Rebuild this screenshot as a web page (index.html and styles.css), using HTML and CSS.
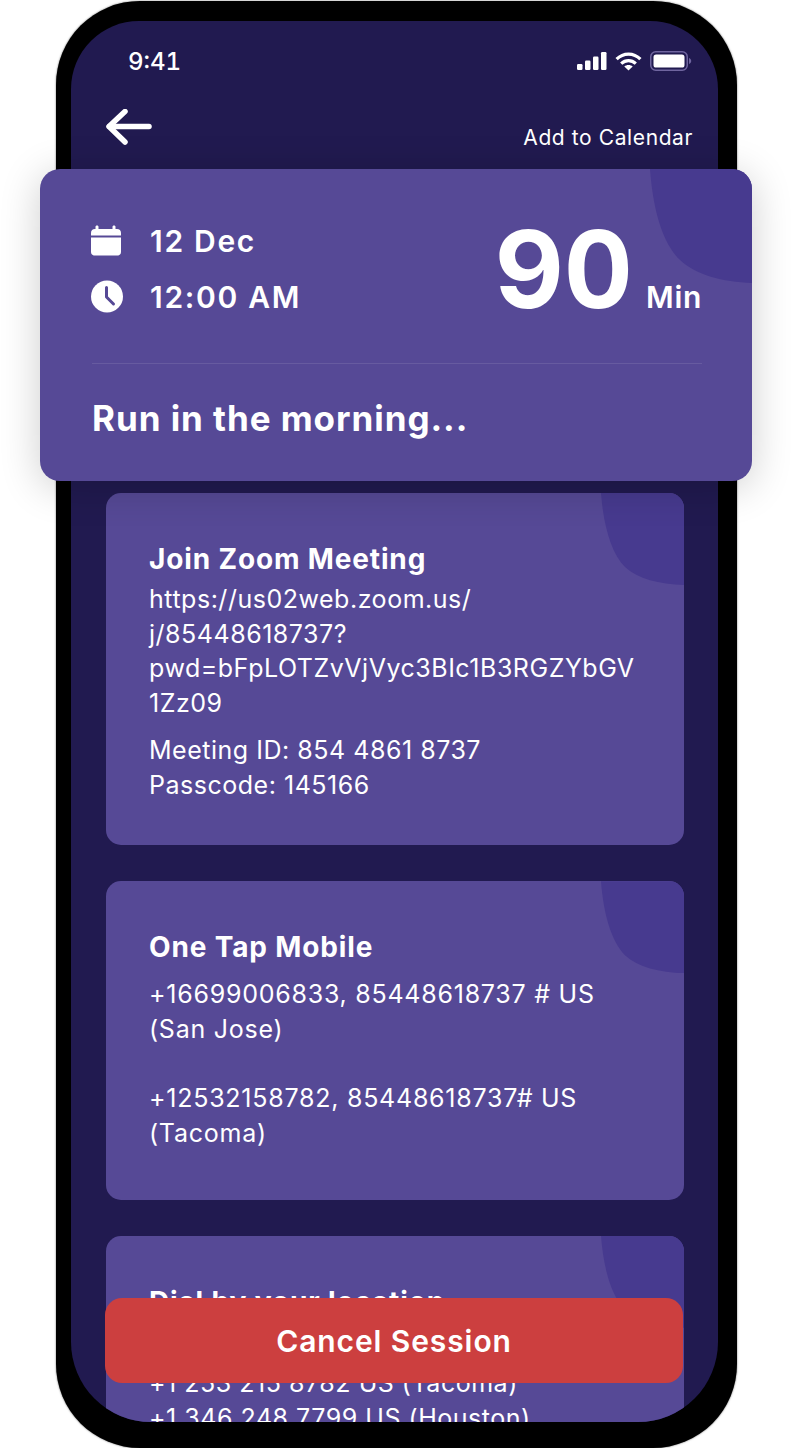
FILE: index.html
```html
<!DOCTYPE html>
<html lang="en">

<head>
    <meta charset="UTF-8">
    <meta name="viewport" content="width=device-width, initial-scale=1.0">
    <title>Session Details</title>
    <link rel="stylesheet" href="styles.css">
</head>

<body>
    <div class="phone">
        <div class="screen">
            <div class="status-bar">
                <span class="status-time">9:41</span>
                <div class="status-icons">
                    <svg width="30" height="18" viewBox="0 0 30 18" fill="#fff">
                        <rect x="0" y="12" width="5.5" height="6" rx="1.2" />
                        <rect x="8" y="8.5" width="5.5" height="9.5" rx="1.2" />
                        <rect x="16" y="4.5" width="5.5" height="13.5" rx="1.2" />
                        <rect x="24" y="0" width="5.5" height="18" rx="1.2" />
                    </svg>
                    <svg width="27" height="19" viewBox="0 0 27 19" fill="none" stroke="#fff" stroke-width="3.2">
                        <path d="M1.6 7.2C8.4 .4 18.6 .4 25.4 7.2" />
                        <path d="M6.2 11.6C10.4 7.6 16.6 7.6 20.8 11.6" />
                        <path d="M9.3 14.6L13.5 18.6L17.7 14.6C15.4 12.6 11.6 12.6 9.3 14.6Z" fill="#fff" stroke="none" />
                    </svg>
                    <svg width="42" height="20" viewBox="0 0 42 20">
                        <rect x=".75" y=".75" width="36.5" height="18.5" rx="5" fill="none" stroke="#6f659f" stroke-width="1.5" />
                        <rect x="3.5" y="3.5" width="31" height="13" rx="2.6" fill="#fff" />
                        <path d="M39 7V13C40.4 12.5 41.2 11.4 41.2 10C41.2 8.6 40.4 7.5 39 7Z" fill="#6f659f" />
                    </svg>
                </div>
            </div>

            <div class="top-bar">
                <svg class="back-arrow" width="46" height="36" viewBox="0 0 46 36" fill="none" stroke="#fff" stroke-width="5.500" stroke-linecap="round" stroke-linejoin="round">
                    <path d="M43 17.500H3.500" />
                    <path d="M19 2.500L3 17.500L19 33" />
                </svg>
                <a class="calendar-link">Add to Calendar</a>
            </div>

            <div class="info-list">
                <div class="info-card">
                    <h2>Join Zoom Meeting</h2>
                    <p class="zoom-link">https://us02web.zoom.us/<br>j/85448618737?<br>pwd=bFpLOTZvVjVyc3BIc1B3RGZYbGV<br>1Zz09</p>
                    <p>Meeting ID: 854 4861 8737<br>Passcode: 145166</p>
                </div>
                <div class="info-card tap-card">
                    <h2 class="tall">One Tap Mobile</h2>
                    <p>+16699006833, 85448618737 # US<br>(San Jose)<br><br>+12532158782, 85448618737# US<br>(Tacoma)</p>
                </div>
                <div class="info-card">
                    <h2 class="tall">Dial by your location</h2>
                    <p>+1 669 900 6833 US (San Jose)<br>+1 253 215 8782 US (Tacoma)<br>+1 346 248 7799 US (Houston)<br>+1 301 715 8592 US (Washington DC)</p>
                </div>
            </div>
        </div>

        <div class="summary-card">
            <div class="summary-top">
                <div class="when">
                    <div class="when-row">
                        <svg width="32" height="31" viewBox="1 0 32 31" fill="#fff">
                            <path d="M7 0.500C8 0.500 8.500 1 8.500 2V4H22.500V2C22.500 1 23 0.500 24 0.500C25 0.500 25.500 1 25.500 2V4H27C29.500 4 31 5.500 31 8V10.500H1V8C1 5.500 2.500 4 5 4H5.500V2C5.500 1 6 0.500 7 0.500Z" />
                            <path d="M1 12.500H31V27C31 29 29.500 30.500 27.500 30.500H4.500C2.500 30.500 1 29 1 27Z" />
                        </svg>
                        <span>12 Dec</span>
                    </div>
                    <div class="when-row">
                        <svg width="32" height="33" viewBox="0 0 32 33">
                            <circle cx="16" cy="16.500" r="16" fill="#fff" />
                            <path d="M15.500 7.500V17L22.500 24" fill="none" stroke="#564996" stroke-width="3" stroke-linecap="round" stroke-linejoin="round" />
                        </svg>
                        <span>12:00 AM</span>
                    </div>
                </div>
                <div class="duration">
                    <span class="duration-num">90</span>
                    <span class="duration-unit">Min</span>
                </div>
            </div>
            <h1 class="session-title">Run in the morning...</h1>
        </div>

        <button class="cancel-button">Cancel Session</button>
    </div>
</body>

</html>
```

FILE: styles.css
```css
body {
    margin: 0;
    background-color: #ffffff;
    color: #ffffff;
    font-family: 'Inter', sans-serif;
    overflow: hidden;
}

.phone {
    position: relative;
    box-sizing: border-box;
    width: 681px;
    height: 1447px;
    margin: 1px 0 0 56px;
    padding: 20px 19px 26px 15px;
    background-color: #000000;
    border-radius: 84px;
    box-shadow: 0 0 2px rgba(0, 0, 0, 0.6);
}

.screen {
    height: 100%;
    overflow: hidden;
    background-color: #211a50;
    border-radius: 68px 68px 80px 80px;
}

.status-bar {
    display: flex;
    justify-content: space-between;
    align-items: center;
    height: 80px;
    padding: 0 26px 0 57px;
}

.status-time {
    font-size: 24px;
    font-weight: 500;
    font-variant-numeric: tabular-nums;
}

.status-icons {
    display: flex;
    align-items: center;
    gap: 8px;
}

.top-bar {
    display: flex;
    justify-content: space-between;
    height: 70px;
    padding: 8px 25px 0 35px;
}

.calendar-link {
    margin-top: 16px;
    font-size: 21px;
    line-height: 26px;
    letter-spacing: 0.6px;
}

.info-list {
    display: flex;
    flex-direction: column;
    gap: 36px;
    margin: 314px 34px 0 35px;
}

.info-card {
    position: relative;
    padding: 49px 43px 43px;
    background-color: #564996;
    border-radius: 15px;
    overflow: hidden;
}

.tap-card {
    padding-bottom: 49px;
}

.info-card::before {
    content: "";
    position: absolute;
    top: 0;
    right: 0;
    width: 83px;
    height: 92px;
    background-color: #473a8f;
    clip-path: path('M0 0C2.400 32 10 60 24 74C37 86 58 91 83 92V0Z');
}

.info-card h2 {
    position: relative;
    margin: 0 0 6px;
    font-size: 28px;
    font-weight: 700;
    line-height: 34px;
    letter-spacing: 0.85px;
}

.info-card h2.tall {
    margin-bottom: 13px;
}

.info-card p {
    position: relative;
    margin: 0;
    font-size: 25px;
    line-height: 34.700px;
    letter-spacing: 0.52px;
}

.info-card .zoom-link {
    padding-bottom: 12px;
}

.info-card.tap-card p {
    letter-spacing: 0.75px;
}

.summary-card {
    position: absolute;
    top: 168px;
    left: -16px;
    box-sizing: border-box;
    width: 712px;
    height: 312px;
    padding: 51px 50px 0 52px;
    overflow: hidden;
    background-color: #564996;
    border-radius: 20px;
    box-shadow: 0 6px 40px rgba(0, 0, 0, 0.2);
}

.summary-card::before {
    content: "";
    position: absolute;
    top: 0;
    right: 0;
    width: 102px;
    height: 114px;
    background-color: #473a8f;
    clip-path: path('M0 0C3 40 12 74 30 91C46 106 72 113 102 114V0Z');
}

.summary-top {
    position: relative;
    display: flex;
    justify-content: space-between;
    height: 143px;
    border-bottom: 1px solid rgba(255, 255, 255, 0.1);
}

.when {
    display: flex;
    flex-direction: column;
    gap: 23px;
    padding-top: 4px;
}

.when-row {
    display: flex;
    align-items: center;
    gap: 27px;
    height: 33px;
    font-size: 30px;
    font-weight: 600;
    letter-spacing: 1.7px;
}

.when-row svg {
    margin-left: -1px;
}

.duration {
    display: flex;
    align-items: baseline;
    gap: 13px;
    height: 100px;
    padding-top: 3px;
}

.duration-num {
    font-size: 107px;
    font-weight: 700;
    font-variant-numeric: tabular-nums;
    line-height: 92px;
}

.duration-unit {
    font-size: 30px;
    font-weight: 600;
    letter-spacing: 0.7px;
}

.session-title {
    position: relative;
    margin: 33px 0 0;
    font-size: 35px;
    font-weight: 700;
    line-height: 42px;
    letter-spacing: 0.95px;
}

.cancel-button {
    position: absolute;
    top: 1297px;
    left: 49px;
    width: 578px;
    height: 85px;
    color: #ffffff;
    background-color: #cc3f3f;
    border: none;
    border-radius: 17px;
    font-family: 'Inter', sans-serif;
    font-size: 30px;
    font-weight: 600;
    letter-spacing: 0.9px;
}
```
